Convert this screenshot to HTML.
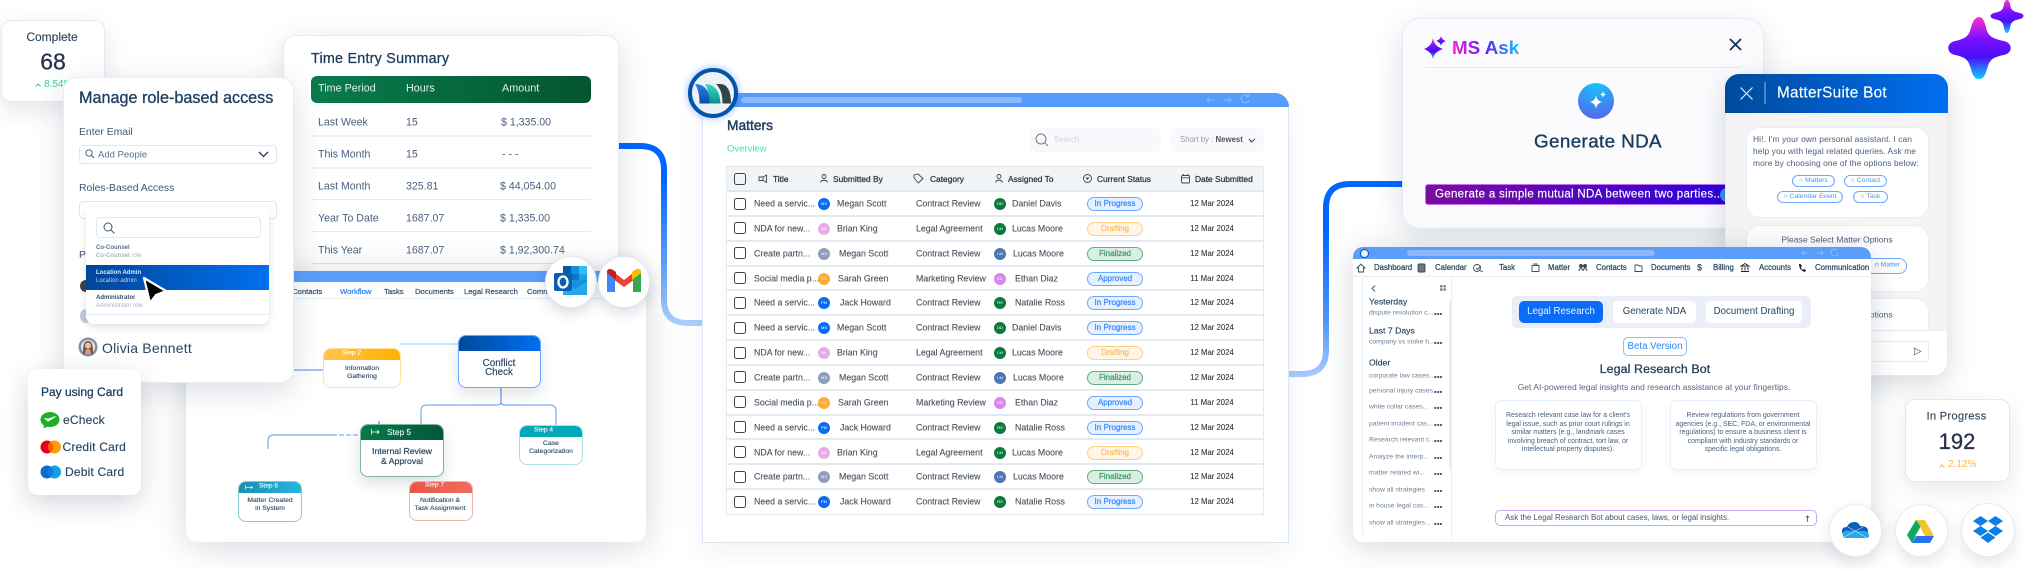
<!DOCTYPE html>
<html lang="en"><head><meta charset="utf-8"><title>MatterSuite</title>
<style>
html,body{margin:0;padding:0;background:#fff}
#p{position:relative;width:2027px;height:569px;overflow:hidden;background:#fff;font-family:"Liberation Sans",sans-serif;color:#1c3d5e;filter:blur(.3px)}
.a{position:absolute;box-sizing:border-box}
.t{position:absolute;white-space:nowrap;line-height:1;transform:translateY(-50%)}
.c{position:absolute;white-space:nowrap;line-height:1;transform:translate(-50%,-50%);text-align:center}
.card{position:absolute;box-sizing:border-box;background:#fff;border:1px solid #e3ebf5}
svg{position:absolute;overflow:visible}
.m{-webkit-text-stroke:.3px currentColor}
.s{-webkit-text-stroke:.15px currentColor}
.r{position:absolute;left:726px;width:538px;height:24.85px;background:#fff;border:1px solid #e3ebf5;border-top:0;border-bottom:2px solid #e1e9f3;box-sizing:border-box;font-size:8.8px;color:#484f58;-webkit-text-stroke:.1px currentColor}
.r .t{top:12px}.r .c{top:12px;font-size:7.8px;color:#333}
.cb{position:absolute;left:7px;top:5.5px;width:12px;height:12px;border:1.3px solid #444;border-radius:2.5px;box-sizing:border-box;background:#fff}
.av{position:absolute;width:12px;height:12px;border-radius:50%;top:6px;color:#fff;font-size:4px;line-height:12px;text-align:center;-webkit-text-stroke:0}
.pl{position:absolute;left:360px;top:5px;width:56px;height:14px;border-radius:7px;font-size:8px;line-height:12px;text-align:center;box-sizing:border-box;border:1px solid;-webkit-text-stroke:.25px currentColor}
.ip{background:#e6f0ff;border-color:#6ea8fb;color:#3d8bfa}
.dr{background:#fff6e8;border-color:#ffcf8a;color:#ffbd63}
.fi{background:#dbeee3;border-color:#5fae84;color:#3f9a6c}
.wn{position:absolute;box-sizing:border-box;background:#fff;border-radius:8px;border:1px solid;overflow:hidden}
.wh{position:absolute;left:0;right:0;top:0;color:#fff}
.lb{color:#2a4562;font-size:6.8px;line-height:8px;-webkit-text-stroke:.12px currentColor}
.st{font-size:6.6px;color:#fff;-webkit-text-stroke:.1px currentColor}
.hi{position:absolute;font-size:8.4px;color:#333;white-space:nowrap;line-height:1;transform:translateY(-50%);top:178.5px;-webkit-text-stroke:.25px currentColor}
.row{font-size:10.6px;color:#4a6180}
.tb{font-size:7.7px;color:#33506e;-webkit-text-stroke:.2px currentColor}
.nv{font-size:7.8px;color:#2a4562;-webkit-text-stroke:.22px currentColor}
.si{font-size:6.8px;color:#6d8097}
.dots{position:absolute;left:1434px;font-size:7.5px;font-weight:bold;color:#33506e;letter-spacing:.2px;white-space:nowrap;line-height:1;transform:translateY(-50%)}
.ch{position:absolute;box-sizing:border-box;border:1px solid #6ea8fb;border-radius:6px;color:#4d94f8;font-size:6.8px;line-height:10px;text-align:center;background:#fff}
.hl{font-size:6.95px;color:#4a6180;line-height:8.5px;text-align:center}
.circ{position:absolute;border-radius:50%;background:#fff;border:1px solid #e4ebf5;box-shadow:0 6px 14px rgba(30,50,80,.12);box-sizing:border-box}
</style></head><body><div id="p">

<!-- connectors -->
<svg width="2027" height="569" style="left:0;top:0">
<defs>
<linearGradient id="g1" gradientUnits="userSpaceOnUse" x1="0" y1="180" x2="0" y2="330"><stop offset="0" stop-color="#0066ff"/><stop offset=".55" stop-color="#5b9ffa"/><stop offset="1" stop-color="#b6d4fc"/></linearGradient>
<linearGradient id="g2" gradientUnits="userSpaceOnUse" x1="0" y1="230" x2="0" y2="378"><stop offset="0" stop-color="#0066ff"/><stop offset=".6" stop-color="#4d95fb"/><stop offset="1" stop-color="#a9cdfb"/></linearGradient>
</defs>
<path d="M610 146H640Q664 146 664 170V300Q664 323 688 323H710" fill="none" stroke="url(#g1)" stroke-width="6"/>
<path d="M1410 184H1350Q1326 184 1326 208V350Q1326 374 1302 374H1280" fill="none" stroke="url(#g2)" stroke-width="6"/>
</svg>

<!-- Complete -->
<div class="card" style="left:1px;top:20px;width:104px;height:82px;border-radius:10px;box-shadow:0 8px 24px rgba(30,50,80,.12)"></div>
<div class="c s" style="left:52px;top:37px;font-size:12px;color:#33475f">Complete</div>
<div class="c m" style="left:53px;top:62px;font-size:23px;color:#27324a">68</div>
<div class="t" style="left:44px;top:85px;font-size:10px;color:#2fd39a">8.54%</div>
<svg width="6" height="4" style="left:35px;top:83px"><path d="M.5 3.5L3 1L5.500 3.500" fill="none" stroke="#2fd39a"/></svg>

<!-- Time entry -->
<div class="card" style="left:283px;top:35px;width:336px;height:250px;border-radius:12px;box-shadow:0 8px 30px rgba(30,50,80,.16)"></div>
<div class="t m" style="left:311px;top:59px;font-size:14.300px;letter-spacing:.25px">Time Entry Summary</div>
<div class="a" style="left:311px;top:76px;width:280px;height:27px;border-radius:6px;background:linear-gradient(90deg,#087c4e,#04552f)"></div>
<div class="t" style="left:318px;top:89px;font-size:10.800px;color:#e4f1ea">Time Period</div>
<div class="t" style="left:406px;top:89px;font-size:10.800px;color:#e4f1ea">Hours</div>
<div class="t" style="left:502px;top:89px;font-size:10.800px;color:#e4f1ea">Amount</div>
<div class="t row" style="left:318px;top:123px">Last Week</div><div class="t row" style="left:406px;top:123px">15</div><div class="t row" style="left:501px;top:123px">$ 1,335.00</div>
<div class="a" style="left:311px;top:135px;width:280px;height:2px;background:#edf2f8"></div>
<div class="t row" style="left:318px;top:155px">This Month</div><div class="t row" style="left:406px;top:155px">15</div><div class="t row" style="left:502px;top:155px">- - -</div>
<div class="a" style="left:311px;top:167px;width:280px;height:2px;background:#edf2f8"></div>
<div class="t row" style="left:318px;top:187px">Last Month</div><div class="t row" style="left:406px;top:187px">325.81</div><div class="t row" style="left:500px;top:187px">$ 44,054.00</div>
<div class="a" style="left:311px;top:199px;width:280px;height:1px;background:#e3ebf5"></div>
<div class="t row" style="left:318px;top:219px">Year To Date</div><div class="t row" style="left:406px;top:219px">1687.07</div><div class="t row" style="left:500px;top:219px">$ 1,335.00</div>
<div class="a" style="left:311px;top:231px;width:280px;height:1px;background:#e3ebf5"></div>
<div class="t row" style="left:318px;top:251px">This Year</div><div class="t row" style="left:406px;top:251px">1687.07</div><div class="t row" style="left:500px;top:251px">$ 1,92,300.74</div>
<div class="a" style="left:311px;top:263px;width:280px;height:1px;background:#dde5ef"></div>

<!-- Workflow card -->
<div class="card" style="left:186px;top:271px;width:460px;height:271px;border-radius:0 0 12px 12px;border:0;box-shadow:0 4px 34px rgba(30,50,80,.2)"></div>
<div class="a" style="left:186px;top:271px;width:460px;height:11px;background:#5b9dfb"></div>
<div class="a" style="left:186px;top:298px;width:460px;height:1px;background:#e8edf4"></div>
<div class="t tb" style="left:292px;top:292px">Contacts</div>
<div class="t tb" style="left:340px;top:292px;color:#2b7ff0">Workflow</div>
<div class="t tb" style="left:384px;top:292px">Tasks</div>
<div class="t tb" style="left:415px;top:292px">Documents</div>
<div class="t tb" style="left:464px;top:292px">Legal Research</div>
<div class="t tb" style="left:527px;top:292px">Comm.</div>

<svg width="2027" height="569" style="left:0;top:0">
<g fill="none" stroke="#5a9cf5" stroke-width="1">
<path d="M280 370H323" stroke="#3b8ae8"/>
<path d="M400 344H458" stroke="#9cc5f8"/>
<path d="M501 387V403" stroke="#2f7fe8"/>
<path d="M501 403Q500 405 497 405H427Q421 405 421 411V425"/>
<path d="M501 403Q502 405 505 405H550Q556 405 556 411V426"/>
<path d="M268 449V441Q268 435 274 435H332"/>
<path d="M332 435H360" stroke-dasharray="5 2"/>
<path d="M379 421V425" stroke="#2f7fe8"/>
</g>
</svg>

<div class="wn" style="left:458px;top:335px;width:83px;height:53px;border-color:#6aa6f7;box-shadow:0 6px 14px rgba(30,50,80,.14)"><div class="wh" style="height:15px;background:linear-gradient(90deg,#004a9c,#006ef0)"></div></div>
<div class="c s" style="left:499px;top:368px;font-size:9.800px;line-height:9px;color:#2a4562">Conflict<br>Check</div>

<div class="wn" style="left:323px;top:348px;width:78px;height:40px;border-color:#ffe0a0"><div class="wh" style="height:11px;background:linear-gradient(90deg,#ffc44d,#ffb000)"></div></div>
<div class="t st" style="left:342px;top:354px">Step 2</div>
<div class="c lb" style="left:362px;top:373px">Information<br>Gathering</div>

<div class="wn" style="left:519px;top:425px;width:64px;height:40px;border-color:#a8e0e4"><div class="wh" style="height:11px;background:#00a9b8"></div></div>
<div class="t st" style="left:534px;top:431px">Step 4</div>
<div class="c lb" style="left:551px;top:448px">Case<br>Categorization</div>

<div class="wn" style="left:360px;top:424px;width:84px;height:53px;border-color:#7ab59c;box-shadow:0 6px 14px rgba(30,50,80,.16)"><div class="wh" style="height:15px;background:linear-gradient(90deg,#067a4a,#05553a)"></div></div>
<svg width="9" height="6" style="left:371px;top:429px"><path d="M.5 0V5.500M.5 3H8M6 1.200L8 3L6 4.800" fill="none" stroke="#fff" stroke-width=".8"/></svg>
<div class="t s" style="left:387px;top:432px;font-size:8.300px;color:#e4f1ea">Step 5</div>
<div class="c" style="left:402px;top:456px;font-size:8.700px;line-height:10px;color:#2a4562;-webkit-text-stroke:.2px #2a4562">Internal Review<br>&amp; Approval</div>

<div class="wn" style="left:409px;top:481px;width:64px;height:40px;border-color:#f2b3ac"><div class="wh" style="height:11px;background:linear-gradient(90deg,#e8564a,#f06c5c)"></div></div>
<div class="t st" style="left:425px;top:486px">Step 7</div>
<div class="c lb" style="left:440px;top:505px">Notification &amp;<br>Task Assignment</div>

<div class="wn" style="left:238px;top:481px;width:64px;height:41px;border-color:#88cbd6"><div class="wh" style="height:11px;background:linear-gradient(90deg,#1a8fb0,#27b5e0)"></div></div>
<svg width="8" height="5" style="left:245px;top:485px"><path d="M.5 0V4.500M.5 2.300H7.500M5.800 1L7.500 2.300L5.800 3.600" fill="none" stroke="#fff" stroke-width=".7"/></svg>
<div class="t st" style="left:259px;top:487px">Step 6</div>
<div class="c lb" style="left:270px;top:505px">Matter Created<br>in System</div>

<!-- Manage role-based access -->
<div class="card" style="left:63px;top:77px;width:231px;height:306px;border-radius:14px;box-shadow:0 8px 30px rgba(30,50,80,.16);border-color:#e8edf5"></div>
<div class="t m" style="left:79px;top:98px;font-size:16.200px">Manage role-based access</div>
<div class="t" style="left:79px;top:133px;font-size:10.400px;color:#3d5775">Enter Email</div>
<div class="a" style="left:79px;top:145px;width:198px;height:19px;border:1px solid #dfe7f2;border-radius:4px"></div>
<svg width="10" height="10" style="left:85px;top:149px"><circle cx="4" cy="4" r="3.200" fill="none" stroke="#3d5775" stroke-width=".9"/><path d="M6.500 6.500L9 9" stroke="#3d5775" stroke-width=".9"/></svg>
<div class="t" style="left:98px;top:154.500px;font-size:9.500px;color:#5a7088">Add People</div>
<svg width="12" height="7" style="left:258px;top:151px"><path d="M1 1L5.500 5.500L10 1" fill="none" stroke="#1c3d5e" stroke-width="1.300"/></svg>
<div class="t" style="left:79px;top:189px;font-size:10.400px;color:#3d5775">Roles-Based Access</div>
<div class="a" style="left:79px;top:201px;width:198px;height:18px;border:1px solid #dfe7f2;border-radius:4px"></div>
<div class="t" style="left:79px;top:256px;font-size:10.400px;color:#3d5775">P</div>
<div class="a" style="left:80px;top:280px;width:12px;height:12px;border-radius:50%;background:#3b3f4b"></div>
<div class="a" style="left:80px;top:309px;width:12px;height:14px;border-radius:50%;background:#c2c9d8"></div>
<!-- dropdown -->
<div class="a" style="left:86px;top:208px;width:183px;height:116px;background:#fff;border-radius:0 0 8px 8px;box-shadow:0 3px 8px rgba(30,50,80,.14)"></div>
<div class="a" style="left:96px;top:217px;width:165px;height:21px;border:1px solid #e0e8f2;border-radius:4px"></div>
<svg width="13" height="13" style="left:103px;top:222px"><circle cx="5" cy="5" r="4" fill="none" stroke="#3d5775"/><path d="M8 8L11.500 11.500" stroke="#3d5775"/></svg>
<div class="t" style="left:96px;top:248px;font-size:6px;font-weight:bold;color:#5c7088">Co-Counsel</div>
<div class="t" style="left:96px;top:256px;font-size:6px;color:#aab4c2"><b>Co-Counsel</b> role</div>
<div class="a" style="left:86px;top:265px;width:183px;height:25px;background:linear-gradient(90deg,#00469a,#0070ef)"></div>
<div class="t" style="left:96px;top:273px;font-size:6px;color:#dfe9f7;font-weight:bold">Location Admin</div>
<div class="t" style="left:96px;top:281px;font-size:6px;color:#b9cfee">Location admin</div>
<div class="t" style="left:96px;top:298px;font-size:6px;font-weight:bold;color:#33506e">Administrator</div>
<div class="t" style="left:96px;top:306px;font-size:6px;color:#aab4c2">Administrator role</div>
<div class="a" style="left:86px;top:314px;width:183px;height:1px;background:#e3ebf5"></div>
<svg width="30" height="30" style="left:140px;top:275px"><path d="M4 3L26 16L16 20L10 28Z" fill="#000" stroke="#fff" stroke-width="2.200" stroke-linejoin="round"/></svg>
<!-- Olivia -->
<svg width="20" height="20" style="left:78px;top:337px"><circle cx="10" cy="10" r="9.500" fill="#7e90ac"/><circle cx="10" cy="10" r="7" fill="#e9e6e4"/><path d="M5 17C5 8 6 4 10 4S15 8 15 17Z" fill="#7a5138"/><circle cx="10" cy="8.500" r="3" fill="#e9c3aa"/><path d="M7 17C7 13 8 12 10 12S13 13 13 17Z" fill="#d99a7a"/></svg>
<div class="t" style="left:102px;top:348px;font-size:14px;color:#2a4562;letter-spacing:.2px">Olivia Bennett</div>

<!-- Pay card -->
<div class="card" style="left:28px;top:369px;width:113px;height:126px;border-radius:10px;border:0;box-shadow:0 8px 26px rgba(30,50,80,.2)"></div>
<div class="t m" style="left:41px;top:392px;font-size:12px">Pay using Card</div>
<svg width="20" height="18" style="left:40px;top:411px"><path d="M10 1C4.500 1 .5 4.500 .5 8.600C.5 11.300 2.200 13.400 4 14.500L3.500 17.500L7 15.800C8 16 9 16 10 16C15.500 16 19.500 12.800 19.500 8.500C19.500 4.500 15.500 1 10 1Z" fill="#21ae27"/><path d="M5 7.500L8 10.300L15.500 5.500L8.300 8Z" fill="#fff" stroke="#fff" stroke-width=".8"/></svg>
<div class="t s" style="left:63px;top:420px;font-size:12px;color:#2a4562;letter-spacing:.2px">eCheck</div>
<svg width="22" height="14" style="left:40px;top:440px"><circle cx="7" cy="7" r="6.500" fill="#eb001b"/><circle cx="14.500" cy="7" r="6.500" fill="#ff9d0b"/><path d="M10.700 1.700A6.500 6.500 0 0 1 10.700 12.300A6.500 6.500 0 0 1 10.700 1.700Z" fill="#ff5f00"/></svg>
<div class="t s" style="left:62.500px;top:447px;font-size:12px;color:#2a4562;letter-spacing:.2px">Credit Card</div>
<svg width="22" height="14" style="left:40px;top:465px"><circle cx="7" cy="7" r="6.500" fill="#0b6fc8"/><circle cx="14.500" cy="7" r="6.500" fill="#17a0ea"/><path d="M10.700 1.700A6.500 6.500 0 0 1 10.700 12.300A6.500 6.500 0 0 1 10.700 1.700Z" fill="#0d7ed6"/></svg>
<div class="t s" style="left:65px;top:472px;font-size:12px;color:#2a4562;letter-spacing:.2px">Debit Card</div>

<!-- Outlook + Gmail -->
<div class="circ" style="left:545px;top:256px;width:52px;height:52px;box-shadow:0 4px 14px rgba(30,50,80,.2)"></div>
<svg width="36" height="36" style="left:553px;top:264px"><rect x="10" y="2" width="24" height="22" fill="#0a73c9"/><rect x="10" y="2" width="8" height="8" fill="#0358a7"/><rect x="18" y="2" width="8" height="8" fill="#1490df"/><rect x="26" y="2" width="8" height="8" fill="#2fc0f2"/><rect x="18" y="10" width="8" height="8" fill="#0d78c8"/><rect x="26" y="10" width="8" height="8" fill="#1aa0e6"/><path d="M10 16L34 16V31H10Z" fill="#1490df"/><path d="M10 17L22 25L34 17V31H10Z" fill="#28a8ea"/><rect x="1" y="9" width="18" height="18" rx="2" fill="#0a5fb0"/><ellipse cx="10" cy="18" rx="4.500" ry="5.500" fill="none" stroke="#fff" stroke-width="2.300"/></svg>
<div class="circ" style="left:598px;top:256px;width:52px;height:52px;box-shadow:0 4px 14px rgba(30,50,80,.2)"></div>
<svg width="38" height="30" style="left:605px;top:266px"><path d="M10 7L19 14L28 7V14.500L19 21L10 14.500Z" fill="#ea4335"/><path d="M2 26V6C2 3 5 2 8 4L10 5.500V26H4C3 26 2 26 2 26Z" fill="#4285f4"/><path d="M36 26V6C36 3 33 2 30 4L28 5.500V26H34C35 26 36 26 36 26Z" fill="#34a853"/><path d="M2 6C2 3 5 2 8 4L11 6V14L2 7Z" fill="#c5221f"/><path d="M36 6C36 3 33 2 30 4L27 6V14L36 7Z" fill="#fbbc04"/></svg>

<!-- Matters card -->
<div class="card" style="left:702px;top:93px;width:587px;height:450px;border-radius:0 14px 0 0;border-color:#dce6f3;box-shadow:0 8px 26px rgba(30,60,110,.07)"></div>
<div class="a" style="left:702px;top:93px;width:587px;height:14px;background:#559bfb;border-radius:0 14px 0 0"></div>
<div class="a" style="left:741px;top:97px;width:281px;height:6px;background:#8cb9f9;border-radius:3px"></div>
<svg width="50" height="12" style="left:1206px;top:94px"><g fill="none" stroke="#8cb9f9" stroke-width="1"><path d="M8 6H1M3.500 3.500L1 6L3.500 8.500M18 6H25M22.500 3.500L25 6L22.500 8.500"/><path d="M42.500 2.500A4 4 0 1 0 43 6M42.500 .5V3H40"/></g></svg>
<!-- logo -->
<div class="a" style="left:688px;top:68px;width:50px;height:50px;border-radius:50%;background:#eef2f7;border:4.500px solid #0256a9;box-shadow:0 0 8px rgba(0,100,255,.45)"></div>
<svg width="2027" height="569" style="left:0;top:0"><defs><linearGradient id="lb" x1="0" y1="0" x2="0" y2="1"><stop offset="0" stop-color="#2a7fe8"/><stop offset="1" stop-color="#0a4ea8"/></linearGradient><linearGradient id="lt" x1="0" y1="0" x2="0" y2="1"><stop offset="0" stop-color="#2fe0c8"/><stop offset="1" stop-color="#0f8f84"/></linearGradient></defs>
<path d="M695 84C704 84 710 90 711 103.500H699.500C699.500 95 698 89 695 84Z" fill="url(#lb)"/>
<path d="M705 84C714 84 720 90 720.500 103.500H709.500C709.500 95 708 89 705 84Z" fill="url(#lt)"/>
<path d="M716 84H720C727 84 731 90 731 103.500H722.500C722.500 95 721 89 716 84Z" fill="#2f4547"/></svg>
<div class="t" style="left:727px;top:126px;font-size:13.800px;-webkit-text-stroke:.45px #1c3d5e">Matters</div>
<div class="t" style="left:727px;top:149px;font-size:9.500px;color:#48dcb1">Overview</div>
<div class="a" style="left:1030px;top:128px;width:131px;height:24px;background:#f8f9fc;border-radius:6px"></div>
<svg width="14" height="14" style="left:1035px;top:133px"><circle cx="6" cy="6" r="5" fill="none" stroke="#7c7c7c"/><path d="M9.500 9.500L13 13" stroke="#7c7c7c"/></svg>
<div class="t" style="left:1054px;top:140px;font-size:8px;color:#cfd2d8">Search</div>
<div class="a" style="left:1171px;top:128px;width:93px;height:24px;background:#f8f9fc;border-radius:6px"></div>
<div class="t" style="left:1180px;top:140px;font-size:7.800px;color:#9a9a9a">Short by : <b style="color:#555">Newest</b></div>
<svg width="8" height="6" style="left:1248px;top:138px"><path d="M1 1L3.500 4L7 1" fill="none" stroke="#444" stroke-width="1"/></svg>

<!-- table header -->
<div class="a" style="left:726px;top:166px;width:538px;height:26px;background:#f2f4f6;border:1px solid #e0e8f2;border-bottom:2px solid #dfe7f2"></div>
<div class="cb" style="left:734px;top:172.500px;background:transparent"></div>
<svg width="10" height="10" style="left:758px;top:174px"><path d="M1 3H5L8.500 1V8.500L5 6.500H1ZM5 3V6.500" fill="none" stroke="#444" stroke-width=".9"/></svg>
<div class="hi" style="left:773px">Title</div>
<svg width="9" height="9" style="left:820px;top:174px"><circle cx="4" cy="2.500" r="2" fill="none" stroke="#444" stroke-width=".9"/><path d="M.5 8.500C1 5.500 7 5.500 7.500 8.500" fill="none" stroke="#444" stroke-width=".9"/></svg>
<div class="hi" style="left:833px">Submitted By</div>
<svg width="11" height="11" style="left:913px;top:173px"><path d="M5 1L10 5.500L5.500 10L1 5V2Z" fill="none" stroke="#444" stroke-width=".9"/></svg>
<div class="hi" style="left:930px">Category</div>
<svg width="9" height="9" style="left:995px;top:174px"><circle cx="4" cy="2.500" r="2" fill="none" stroke="#444" stroke-width=".9"/><path d="M.5 8.500C1 5.500 7 5.500 7.500 8.500" fill="none" stroke="#444" stroke-width=".9"/></svg>
<div class="hi" style="left:1008px">Assigned To</div>
<svg width="10" height="10" style="left:1083px;top:174px"><circle cx="4.500" cy="4.500" r="4" fill="none" stroke="#444" stroke-width=".9"/><path d="M2.500 3.500H6.500L4.500 6Z" fill="#444"/></svg>
<div class="hi" style="left:1097px">Current Status</div>
<svg width="10" height="10" style="left:1181px;top:174px"><rect x=".5" y="1.500" width="8" height="7.500" rx="1" fill="none" stroke="#444" stroke-width=".9"/><path d="M.5 3.800H8.500M2.500 0V2M6.500 0V2" stroke="#444" stroke-width=".9"/></svg>
<div class="hi" style="left:1195px">Date Submitted</div>

<!-- rows -->
<div class="r" style="top:192px"><div class="cb"></div><div class="t" style="left:27px">Need a servic...</div><div class="av" style="left:91px;background:#0a6cf5">MS</div><div class="t" style="left:110px">Megan Scott</div><div class="t" style="left:189px">Contract Review</div><div class="av" style="left:267px;background:#0b7a3e">DD</div><div class="t" style="left:285px">Daniel Davis</div><div class="pl ip">In Progress</div><div class="c" style="left:485px">12 Mar 2024</div></div>
<div class="r" style="top:216.800px"><div class="cb"></div><div class="t" style="left:27px">NDA for new...</div><div class="av" style="left:91px;background:#e3ade8">BK</div><div class="t" style="left:110px">Brian King</div><div class="t" style="left:189px">Legal Agreement</div><div class="av" style="left:267px;background:#0b7a3e">LM</div><div class="t" style="left:285px">Lucas Moore</div><div class="pl dr">Drafting</div><div class="c" style="left:485px">12 Mar 2024</div></div>
<div class="r" style="top:241.700px"><div class="cb"></div><div class="t" style="left:27px">Create partn...</div><div class="av" style="left:91px;background:#8f9dbc">MS</div><div class="t" style="left:112px">Megan Scott</div><div class="t" style="left:189px">Contract Review</div><div class="av" style="left:267px;background:#4d76b8">LM</div><div class="t" style="left:286px">Lucas Moore</div><div class="pl fi">Finalized</div><div class="c" style="left:485px">12 Mar 2024</div></div>
<div class="r" style="top:266.500px"><div class="cb"></div><div class="t" style="left:27px">Social media p...</div><div class="av" style="left:91px;background:#ffab36">SG</div><div class="t" style="left:111px">Sarah Green</div><div class="t" style="left:189px">Marketing Review</div><div class="av" style="left:267px;background:#d987ee">ED</div><div class="t" style="left:288px">Ethan Diaz</div><div class="pl ip">Approved</div><div class="c" style="left:485px">11 Mar 2024</div></div>
<div class="r" style="top:291.400px"><div class="cb"></div><div class="t" style="left:27px">Need a servic...</div><div class="av" style="left:91px;background:#0a6cf5">PM</div><div class="t" style="left:113px">Jack Howard</div><div class="t" style="left:189px">Contract Review</div><div class="av" style="left:267px;background:#0b7a3e">RS</div><div class="t" style="left:288px">Natalie Ross</div><div class="pl ip">In Progress</div><div class="c" style="left:485px">12 Mar 2024</div></div>
<div class="r" style="top:316.200px"><div class="cb"></div><div class="t" style="left:27px">Need a servic...</div><div class="av" style="left:91px;background:#0a6cf5">MS</div><div class="t" style="left:110px">Megan Scott</div><div class="t" style="left:189px">Contract Review</div><div class="av" style="left:267px;background:#0b7a3e">DD</div><div class="t" style="left:285px">Daniel Davis</div><div class="pl ip">In Progress</div><div class="c" style="left:485px">12 Mar 2024</div></div>
<div class="r" style="top:341.100px"><div class="cb"></div><div class="t" style="left:27px">NDA for new...</div><div class="av" style="left:91px;background:#e3ade8">BK</div><div class="t" style="left:110px">Brian King</div><div class="t" style="left:189px">Legal Agreement</div><div class="av" style="left:267px;background:#0b7a3e">LM</div><div class="t" style="left:285px">Lucas Moore</div><div class="pl dr">Drafting</div><div class="c" style="left:485px">12 Mar 2024</div></div>
<div class="r" style="top:365.900px"><div class="cb"></div><div class="t" style="left:27px">Create partn...</div><div class="av" style="left:91px;background:#8f9dbc">MS</div><div class="t" style="left:112px">Megan Scott</div><div class="t" style="left:189px">Contract Review</div><div class="av" style="left:267px;background:#4d76b8">LM</div><div class="t" style="left:286px">Lucas Moore</div><div class="pl fi">Finalized</div><div class="c" style="left:485px">12 Mar 2024</div></div>
<div class="r" style="top:390.800px"><div class="cb"></div><div class="t" style="left:27px">Social media p...</div><div class="av" style="left:91px;background:#ffab36">SG</div><div class="t" style="left:111px">Sarah Green</div><div class="t" style="left:189px">Marketing Review</div><div class="av" style="left:267px;background:#d987ee">ED</div><div class="t" style="left:288px">Ethan Diaz</div><div class="pl ip">Approved</div><div class="c" style="left:485px">11 Mar 2024</div></div>
<div class="r" style="top:415.600px"><div class="cb"></div><div class="t" style="left:27px">Need a servic...</div><div class="av" style="left:91px;background:#0a6cf5">PM</div><div class="t" style="left:113px">Jack Howard</div><div class="t" style="left:189px">Contract Review</div><div class="av" style="left:267px;background:#0b7a3e">RS</div><div class="t" style="left:288px">Natalie Ross</div><div class="pl ip">In Progress</div><div class="c" style="left:485px">12 Mar 2024</div></div>
<div class="r" style="top:440.500px"><div class="cb"></div><div class="t" style="left:27px">NDA for new...</div><div class="av" style="left:91px;background:#e3ade8">BK</div><div class="t" style="left:110px">Brian King</div><div class="t" style="left:189px">Legal Agreement</div><div class="av" style="left:267px;background:#0b7a3e">LM</div><div class="t" style="left:285px">Lucas Moore</div><div class="pl dr">Drafting</div><div class="c" style="left:485px">12 Mar 2024</div></div>
<div class="r" style="top:465.300px"><div class="cb"></div><div class="t" style="left:27px">Create partn...</div><div class="av" style="left:91px;background:#8f9dbc">MS</div><div class="t" style="left:112px">Megan Scott</div><div class="t" style="left:189px">Contract Review</div><div class="av" style="left:267px;background:#4d76b8">LM</div><div class="t" style="left:286px">Lucas Moore</div><div class="pl fi">Finalized</div><div class="c" style="left:485px">12 Mar 2024</div></div>
<div class="r" style="top:490.200px;border-bottom-width:1px"><div class="cb"></div><div class="t" style="left:27px">Need a servic...</div><div class="av" style="left:91px;background:#0a6cf5">PM</div><div class="t" style="left:113px">Jack Howard</div><div class="t" style="left:189px">Contract Review</div><div class="av" style="left:267px;background:#0b7a3e">RS</div><div class="t" style="left:288px">Natalie Ross</div><div class="pl ip">In Progress</div><div class="c" style="left:485px">12 Mar 2024</div></div>

<!-- MS Ask -->
<div class="card" style="left:1402px;top:18px;width:362px;height:211px;border-radius:18px;background:#fbfbfe;box-shadow:0 10px 30px rgba(30,50,80,.16)"></div>
<svg width="2027" height="569" style="left:0;top:0"><defs>
<linearGradient id="msg" x1="0" y1="0" x2="0" y2="1"><stop offset="0" stop-color="#ff2fd0"/><stop offset=".35" stop-color="#7a10ff"/><stop offset=".65" stop-color="#4a10f5"/><stop offset="1" stop-color="#10d0ff"/></linearGradient>
<linearGradient id="mst" x1="0" y1="0" x2="1" y2="0"><stop offset="0" stop-color="#ff20d8"/><stop offset=".5" stop-color="#5a20f0"/><stop offset="1" stop-color="#10c8ff"/></linearGradient>
<radialGradient id="btn" cx=".5" cy="0" r="1.100"><stop offset="0" stop-color="#14c8ff"/><stop offset="1" stop-color="#5a5fe8"/></radialGradient>
</defs>
<path d="M1433 38C1434 44 1437 47 1443 49C1437 51 1434 54 1433 59C1432 54 1429 51 1424 49C1429 47 1432 44 1433 38Z" fill="url(#msg)"/>
<path d="M1441 36C1442 39 1443 40 1446 41C1443 42 1442 43 1441 46C1440 43 1439 42 1436 41C1439 40 1440 39 1441 36Z" fill="url(#msg)"/>
<text x="1452" y="54" font-family="Liberation Sans" font-size="18.800" font-weight="bold" fill="url(#mst)">MS Ask</text>
<path d="M1730 39L1741 50M1741 39L1730 50" stroke="#12324f" stroke-width="1.800" fill="none"/>
<g transform="translate(2 0)">
<circle cx="1594" cy="101" r="18" fill="url(#btn)"/>
<path d="M1594 95C1594.600 99 1596 100.600 1600 102C1596 103.400 1594.600 105 1594 109C1593.400 105 1592 103.400 1588 102C1592 100.600 1593.400 99 1594 95Z" fill="#fff"/>
<path d="M1601 91C1601.300 93 1602 93.800 1604 94.500C1602 95.200 1601.300 96 1601 98C1600.700 96 1600 95.200 1598 94.500C1600 93.800 1600.700 93 1601 91Z" fill="#fff"/>
</g>
</svg>
<div class="a" style="left:1425px;top:67px;width:316px;height:1px;background:#e3ebf5"></div>
<div class="c" style="left:1598px;top:142px;font-size:18.800px;letter-spacing:.4px;color:#183a5c;-webkit-text-stroke:.35px #183a5c">Generate NDA</div>
<div class="a" style="left:1425px;top:184px;width:310px;height:21px;border-radius:3px;background:linear-gradient(90deg,#7c0d9c,#2a00e0);border:.5px solid #c070f0"></div>
<div class="t s" style="left:1435px;top:194.500px;font-size:11.500px;color:#fff;letter-spacing:.3px">Generate a simple mutual NDA between two parties...</div>
<div class="a" style="left:1720px;top:188px;width:14px;height:14px;border-radius:50%;background:#3b90e8"></div>

<!-- Sparkles -->
<svg width="2027" height="569" style="left:0;top:0">
<path d="M1979 17C1984 17 1985 24 1987 31C1989 36 1993 39 2004 41C2013 43 2013 53 2004 55C1993 57 1990 60 1988 66C1986 72 1985 79 1979 79C1973 79 1972 72 1970 66C1968 60 1965 57 1955 55C1946 53 1946 43 1955 41C1965 39 1968 36 1970 31C1972 24 1974 17 1979 17Z" fill="url(#msg)"/>
<path d="M2007 0C2009 0 2010 3 2010.500 6.500C2011.500 10 2013 11.500 2019 12.800C2025 14 2025 18 2019 19.200C2013 20.500 2011.500 22 2010.500 25.500C2010 29 2009 33 2007 33C2005 33 2004 29 2003.500 25.500C2002.500 22 2001 20.500 1995 19.200C1989 18 1989 14 1995 12.800C2001 11.500 2002.500 10 2003.500 6.500C2004 3 2005 0 2007 0Z" fill="url(#msg)"/>
</svg>

<!-- Chat bot -->
<div class="a" style="left:1725px;top:74px;width:223px;height:302px;border-radius:14px;background:#f4f4f5;border:1px solid #e3ebf5;box-shadow:0 8px 28px rgba(30,50,80,.18)"></div>
<div class="a" style="left:1725px;top:74px;width:223px;height:39px;border-radius:14px 14px 0 0;background:linear-gradient(90deg,#004a9c,#006ef0)"></div>
<svg width="14" height="14" style="left:1740px;top:87px"><path d="M.5 .5L12.500 12.500M12.500 .5L.5 12.500" stroke="#e6f0fb" stroke-width="1.200"/></svg>
<div class="a" style="left:1764px;top:82px;width:1.500px;height:22px;background:#4c86c8"></div>
<div class="t s" style="left:1777px;top:93px;font-size:15.300px;color:#fff;letter-spacing:.3px">MatterSuite Bot</div>
<div class="a" style="left:1746px;top:127px;width:183px;height:91px;background:#fff;border-radius:14px;border:1px solid #e8eef7"></div>
<div class="t" style="left:1753px;top:139px;font-size:8.400px;color:#4a5f7a;letter-spacing:.1px">Hi!. I'm your own personal assistant. I can</div>
<div class="t" style="left:1753px;top:151px;font-size:8.400px;color:#4a5f7a;letter-spacing:.1px">help you with legal related queries. Ask me</div>
<div class="t" style="left:1753px;top:163px;font-size:8.400px;color:#4a5f7a;letter-spacing:.1px">more by choosing one of the options below:</div>
<div class="ch" style="left:1792px;top:175px;width:43px;height:12px">&#9675; Matters</div>
<div class="ch" style="left:1844px;top:175px;width:43px;height:12px">&#9675; Contact</div>
<div class="ch" style="left:1777px;top:191px;width:66px;height:12px">&#9675; Calendar Event</div>
<div class="ch" style="left:1853px;top:191px;width:35px;height:12px">&#9675; Task</div>
<div class="a" style="left:1746px;top:225px;width:183px;height:67px;background:#fff;border-radius:14px;border:1px solid #e8eef7"></div>
<div class="c" style="left:1837px;top:240px;font-size:8.600px;color:#4a5f7a">Please Select Matter Options</div>
<div class="a" style="left:1800px;top:258px;width:107px;height:16px;border:1px solid #6ea8fb;border-radius:8px"></div>
<div class="t" style="left:1875px;top:265.500px;font-size:6.800px;color:#4d94f8">n Matter</div>
<div class="a" style="left:1746px;top:298px;width:183px;height:33px;background:#fff;border-radius:14px 14px 0 0;border:1px solid #e8eef7;border-bottom:0"></div>
<div class="t" style="left:1863px;top:315px;font-size:8.600px;color:#4a5f7a">Options</div>
<div class="a" style="left:1725px;top:330px;width:223px;height:46px;background:#fff;border-radius:0 0 14px 14px;border:1px solid #e3ebf5"></div>
<div class="a" style="left:1800px;top:341px;width:129px;height:21px;border:1px solid #e6ecf5;border-radius:2px"></div>
<svg width="9" height="9" style="left:1913px;top:347px"><path d="M1 1L8 4.500L1 8L2 4.500Z" fill="none" stroke="#6b7f96" stroke-width=".8"/></svg>

<!-- Research card -->
<div class="a" style="left:1353px;top:247px;width:518px;height:295px;background:#fff;border-radius:10px 0 0 10px;box-shadow:0 4px 30px rgba(30,50,80,.2)"></div>
<div class="a" style="left:1353px;top:247px;width:518px;height:12px;border-radius:10px 10px 0 0;background:#5a9dfb"></div>
<div class="a" style="left:1360px;top:249px;width:9px;height:9px;border-radius:50%;background:#eef2f7;border:1px solid #0256a9"></div>
<div class="a" style="left:1407px;top:250px;width:248px;height:6px;border-radius:3px;background:#8cb9f9"></div>
<svg width="45" height="10" style="left:1801px;top:248px"><g fill="none" stroke="#8cb9f9" stroke-width=".9"><path d="M7 5H1M3 3L1 5L3 7M16 5H22M20 3L22 5L20 7"/><path d="M36 2A3.500 3.500 0 1 0 37 5"/></g></svg>
<div class="a" style="left:1353px;top:276px;width:518px;height:1px;background:#e9eef5"></div>
<div class="t nv" style="left:1374px;top:268px">Dashboard</div>
<div class="t nv" style="left:1435px;top:268px">Calendar</div>
<div class="t nv" style="left:1499px;top:268px">Task</div>
<div class="t nv" style="left:1548px;top:268px">Matter</div>
<div class="t nv" style="left:1596px;top:268px">Contacts</div>
<div class="t nv" style="left:1651px;top:268px">Documents</div>
<div class="t nv" style="left:1713px;top:268px">Billing</div>
<div class="t nv" style="left:1759px;top:268px">Accounts</div>
<div class="t nv" style="left:1815px;top:268px">Communication</div>
<div class="t" style="left:1697px;top:268px;font-size:9px;font-weight:bold;color:#33506e">$</div>
<svg width="2027" height="569" style="left:0;top:0"><g fill="none" stroke="#3a4a5c" stroke-width=".9">
<path d="M1361 264L1357 268H1358.500V272H1363.500V268H1365Z"/>
<rect x="1418" y="264" width="7" height="8" rx="1" fill="#6a7686"/>
<circle cx="1477" cy="268" r="3.500"/><path d="M1479 270L1483 272M1476 268L1477.500 269.500L1481 266"/>
<rect x="1532" y="265.500" width="7" height="6"/><path d="M1534 265.500V264H1537V265.500"/>
<circle cx="1581" cy="266" r="1.500" fill="#3a4a5c"/><circle cx="1585" cy="266" r="1.500" fill="#3a4a5c"/><path d="M1579 271C1579 268 1583 268 1583 271M1583 271C1583 268 1587 268 1587 271"/>
<path d="M1635 265H1638L1639 266H1642V271.500H1635Z"/>
<path d="M1745 263.500L1749 266H1741ZM1742 267V270.500M1745 267V270.500M1748 267V270.500M1741 271.500H1749" stroke="#222"/>
<path d="M1799 264C1799 268 1801 271 1805 272L1806 270L1804 269L1802.500 270C1801.500 269 1801 268 1801 267L1802 266L1800.500 264Z" fill="#222" stroke="none"/>
</g></svg>

<!-- Sidebar -->
<div class="a" style="left:1362px;top:277px;width:90px;height:265px;border-left:1px solid #edf1f7;border-right:1px solid #edf1f7;border-radius:0 0 0 8px"></div>
<div class="a" style="left:1449px;top:300px;width:2.500px;height:170px;background:#ecf0f6"></div>
<svg width="6" height="7" style="left:1371px;top:285px"><path d="M4 .5L1 3.500L4 6.500" fill="none" stroke="#4a6180"/></svg>
<svg width="6" height="6" style="left:1440px;top:285px"><rect width="2.500" height="2.500" fill="#7a8aa0"/><rect x="3.300" width="2.500" height="2.500" fill="#7a8aa0"/><rect y="3.300" width="2.500" height="2.500" fill="#7a8aa0"/><rect x="3.300" y="3.300" width="2.500" height="2.500" fill="#7a8aa0"/></svg>
<div class="t s" style="left:1369px;top:302px;font-size:8.700px;color:#2a4562">Yesterday</div>
<div class="t si" style="left:1369px;top:314px">dispute resolution c...</div><div class="dots" style="top:314px">&#8226;&#8226;&#8226;</div>
<div class="t s" style="left:1369px;top:331px;font-size:8.700px;color:#2a4562">Last 7 Days</div>
<div class="t si" style="left:1369px;top:343px">company vs stoke h...</div><div class="dots" style="top:343px">&#8226;&#8226;&#8226;</div>
<div class="t s" style="left:1369px;top:363px;font-size:8.700px;color:#2a4562">Older</div>
<div class="t si" style="left:1369px;top:377px">corporate law cases...</div><div class="dots" style="top:377px">&#8226;&#8226;&#8226;</div>
<div class="t si" style="left:1369px;top:392px">personal injury cases...</div><div class="dots" style="top:392px">&#8226;&#8226;&#8226;</div>
<div class="t si" style="left:1369px;top:408px">white collar cases...</div><div class="dots" style="top:408px">&#8226;&#8226;&#8226;</div>
<div class="t si" style="left:1369px;top:425px">patient incident cas...</div><div class="dots" style="top:425px">&#8226;&#8226;&#8226;</div>
<div class="t si" style="left:1369px;top:441px">Research relevant c...</div><div class="dots" style="top:441px">&#8226;&#8226;&#8226;</div>
<div class="t si" style="left:1369px;top:458px">Analyze the interp...</div><div class="dots" style="top:458px">&#8226;&#8226;&#8226;</div>
<div class="t si" style="left:1369px;top:474px">matter related wi...</div><div class="dots" style="top:474px">&#8226;&#8226;&#8226;</div>
<div class="t si" style="left:1369px;top:491px">show all strategies</div><div class="dots" style="top:491px">&#8226;&#8226;&#8226;</div>
<div class="t si" style="left:1369px;top:507px">in house legal cas...</div><div class="dots" style="top:507px">&#8226;&#8226;&#8226;</div>
<div class="t si" style="left:1369px;top:524px">show all strategies...</div><div class="dots" style="top:524px">&#8226;&#8226;&#8226;</div>

<!-- Research content -->
<div class="a" style="left:1512px;top:296px;width:299px;height:32px;border-radius:5px;background:#e9eef8"></div>
<div class="a" style="left:1519px;top:301px;width:84px;height:22px;border-radius:5px;background:#0b6cf5"></div>
<div class="c" style="left:1561px;top:312px;font-size:9.700px;color:#eaf2ff">Legal Research</div>
<div class="a" style="left:1613px;top:301px;width:83px;height:22px;border-radius:4px;background:#fff"></div>
<div class="c" style="left:1654.500px;top:312px;font-size:9.700px;color:#2a4562">Generate NDA</div>
<div class="a" style="left:1706px;top:301px;width:96px;height:22px;border-radius:4px;background:#fff"></div>
<div class="c" style="left:1754px;top:312px;font-size:9.700px;color:#2a4562">Document Drafting</div>
<div class="a" style="left:1623px;top:337px;width:64px;height:19px;border:1px solid #8dbbf9;border-radius:5px"></div>
<div class="c" style="left:1655px;top:346.500px;font-size:9.700px;color:#2d86f5">Beta Version</div>
<div class="c m" style="left:1655px;top:369px;font-size:12.400px;letter-spacing:.1px;color:#1c3d5e">Legal Research Bot</div>
<div class="c" style="left:1654px;top:387px;font-size:8.500px;color:#54677f">Get AI-powered legal insights and research assistance at your fingertips.</div>
<div class="a" style="left:1495px;top:400px;width:147px;height:70px;border:1px solid #e8eef6;border-radius:6px;box-shadow:0 4px 10px rgba(30,60,110,.04)"></div>
<div class="c hl" style="left:1568px;top:433px">Research relevant case law for a client's<br>legal issue, such as prior court rulings in<br>similar matters (e.g., landmark cases<br>involving breach of contract, tort law, or<br>intellectual property disputes).</div>
<div class="a" style="left:1670px;top:400px;width:147px;height:70px;border:1px solid #e8eef6;border-radius:6px;box-shadow:0 4px 10px rgba(30,60,110,.04)"></div>
<div class="c hl" style="left:1743px;top:433px">Review regulations from government<br>agencies (e.g., SEC, FDA, or environmental<br>regulations) to ensure a business client is<br>compliant with industry standards or<br>specific legal obligations.</div>
<div class="a" style="left:1495px;top:510px;width:322px;height:16px;border-radius:5px;border:1px solid #c9a8ee"></div>
<div class="t" style="left:1505px;top:518px;font-size:7.900px;color:#3d5775">Ask the Legal Research Bot about cases, laws, or legal insights.</div>
<svg width="5" height="7" style="left:1805px;top:515px"><path d="M2.500 7V1M1 2.500L2.500 1L4 2.500" fill="none" stroke="#33506e" stroke-width=".8"/></svg>

<!-- In Progress -->
<div class="card" style="left:1905px;top:399px;width:105px;height:83px;border-radius:10px;border-color:#dfe8f3;box-shadow:0 8px 22px rgba(30,50,80,.1)"></div>
<div class="c s" style="left:1956.500px;top:417px;font-size:11.300px;color:#33475f;letter-spacing:.2px">In Progress</div>
<div class="c m" style="left:1957px;top:442px;font-size:22px;color:#27324a">192</div>
<svg width="6" height="4" style="left:1939px;top:464px"><path d="M.5 3.500L3 1L5.500 3.500" fill="none" stroke="#ffb54d"/></svg>
<div class="t" style="left:1948px;top:465px;font-size:10px;color:#ffb54d">2.12%</div>

<!-- Storage circles -->
<div class="circ" style="left:1829px;top:504px;width:53px;height:53px"></div>
<svg width="30" height="18" style="left:1841px;top:522px"><path d="M7 14C3 14 1 12 1 9S3 5 6 5C7 2 10 0 13 0C16 0 18 1 19 4C23 4 27 5 27 9C27 12 25 14 21 14Z" fill="#0a5fb8"/><path d="M4 16C1 15 1 10 4 9C7 8 8 9 10 9L23 9C26 9 28 11 28 14C28 15 27 16 26 16Z" fill="#28a8ea"/><path d="M7 5L14 9L22 5" fill="none" stroke="#c7e6fa" stroke-width=".6"/><path d="M2 16L14 9L26 16" fill="none" stroke="#c7e6fa" stroke-width=".6"/></svg>
<div class="circ" style="left:1895px;top:504px;width:53px;height:53px"></div>
<svg width="28" height="25" style="left:1907px;top:519px"><path d="M9 1H18L27 17H18Z" fill="#f4c430"/><path d="M9 1L0 16L5 24L14 8Z" fill="#0da960"/><path d="M5 24H23L27 17H9.500Z" fill="#2a71ed"/><path d="M14 8L8.500 17" stroke="#fff" stroke-width=".8"/></svg>
<div class="circ" style="left:1961px;top:503px;width:54px;height:54px"></div>
<svg width="30" height="28" style="left:1973px;top:516px"><path d="M7.500 0L15 5L7.500 10L0 5ZM22.500 0L30 5L22.500 10L15 5ZM7.500 10L15 15L7.500 20L0 15ZM22.500 10L30 15L22.500 20L15 15ZM7.500 21.500L15 16.500L22.500 21.500L15 27Z" fill="#0a7de8"/></svg>

</div></body></html>
